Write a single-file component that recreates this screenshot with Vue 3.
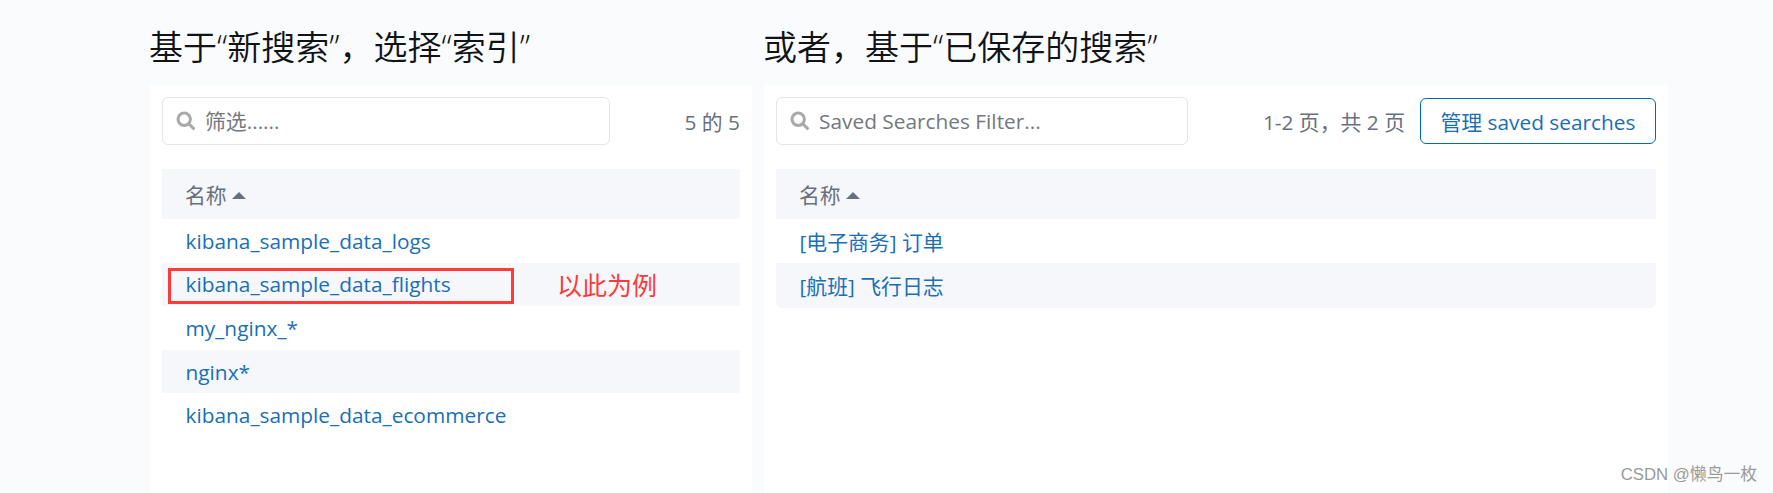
<template>
  <div class="page">
    <section class="column column-left">
      <h2 class="title">基于“新搜索”，选择“索引”</h2>
      <div class="panel">
        <div class="toolbar">
          <label class="search">
            <svg class="search-icon" viewBox="0 0 20 20" aria-hidden="true">
              <circle cx="8.2" cy="8.2" r="6.2" />
              <path d="M12.8 12.8 18.4 18.4" />
            </svg>
            <input type="text" placeholder="筛选......" />
          </label>
          <span class="pager">5 的 5</span>
        </div>
        <div class="table">
          <div class="table-head">名称<i class="sort"></i></div>
          <div v-for="(row, index) in indices" :key="row" class="row" :class="{ striped: index % 2 === 1 }">
            <a class="link">{{ row }}</a>
            <template v-if="row === 'kibana_sample_data_flights'">
              <span class="mark"></span>
              <span class="note">以此为例</span>
            </template>
          </div>
        </div>
      </div>
    </section>

    <section class="column column-right">
      <h2 class="title">或者，基于“已保存的搜索”</h2>
      <div class="panel">
        <div class="toolbar">
          <label class="search search-saved">
            <svg class="search-icon" viewBox="0 0 20 20" aria-hidden="true">
              <circle cx="8.2" cy="8.2" r="6.2" />
              <path d="M12.8 12.8 18.4 18.4" />
            </svg>
            <input type="text" placeholder="Saved Searches Filter..." />
          </label>
          <span class="pager">1-2 页，共 2 页</span>
          <button class="manage">管理 saved searches</button>
        </div>
        <div class="table">
          <div class="table-head">名称<i class="sort"></i></div>
          <div v-for="(row, index) in saved" :key="row" class="row" :class="{ striped: index % 2 === 1 }">
            <a class="link">{{ row }}</a>
          </div>
        </div>
      </div>
    </section>

    <span class="watermark">CSDN @懒鸟一枚</span>
  </div>
</template>

<script setup>
const indices = [
  'kibana_sample_data_logs',
  'kibana_sample_data_flights',
  'my_nginx_*',
  'nginx*',
  'kibana_sample_data_ecommerce',
]

const saved = ['[电子商务] 订单', '[航班] 飞行日志']
</script>

<style>
html,
body {
  margin: 0;
  background: #fafbfd;
}
</style>

<style scoped>
.page {
  position: relative;
  width: 1773px;
  height: 493px;
  overflow: hidden;
  box-sizing: border-box;
  padding-left: 150px;
  display: flex;
  gap: 12px;
  background: #fafbfd;
  font-family: "Open Sans", "Noto Sans CJK SC", sans-serif;
  font-size: 20.85px;
  color: #343741;
}

.column-left {
  width: 602px;
}

.column-right {
  width: 904px;
}

.title {
  margin: 0 0 0 -1px;
  height: 85px;
  line-height: 94px;
  font-size: 34px;
  font-weight: 350;
  color: #111317;
  white-space: nowrap;
}

.panel {
  height: 408px;
  box-sizing: border-box;
  padding: 12px;
  background: #fff;
}

.toolbar {
  display: flex;
  align-items: center;
  height: 48px;
}

.search {
  display: flex;
  align-items: center;
  gap: 9px;
  width: 448px;
  height: 48px;
  box-sizing: border-box;
  padding-left: 13px;
  border: 1px solid #e3e5e8;
  border-radius: 6px;
  background: #fff;
}

.search-saved {
  width: 412px;
}

.search-icon {
  flex: none;
  width: 20px;
  height: 20px;
  fill: none;
  stroke: #a8a9ab;
  stroke-width: 3;
}

.search input {
  flex: 1;
  min-width: 0;
  border: 0;
  outline: 0;
  padding: 0;
  background: transparent;
  font: inherit;
  color: #343741;
}

.search input::placeholder {
  color: #74787f;
  opacity: 1;
}

.pager {
  margin-left: auto;
  color: #69707d;
  white-space: nowrap;
}

.manage {
  margin-left: 15px;
  width: 236px;
  height: 46px;
  padding: 0;
  border: 1px solid #006bb4;
  border-radius: 6px;
  background: #fff;
  font: inherit;
  color: #1a6fb5;
  white-space: nowrap;
}

.table {
  margin-top: 24px;
}

.table-head {
  display: flex;
  align-items: center;
  height: 50px;
  padding-left: 23px;
  background: #f5f7fa;
  color: #69707d;
}

.sort {
  margin-left: 5px;
  margin-top: 2px;
  width: 0;
  height: 0;
  border-left: 7px solid transparent;
  border-right: 7px solid transparent;
  border-bottom: 7px solid #69707d;
}

.row {
  position: relative;
  display: flex;
  align-items: center;
  height: 43.6px;
  padding-left: 23.5px;
}

.column-right .row:last-child {
  height: 45px;
  border-bottom-right-radius: 6px;
  border-bottom-left-radius: 6px;
}

.striped {
  background: #f5f7fa;
}

.link {
  color: #1a6fb5;
  white-space: nowrap;
}

.mark {
  position: absolute;
  left: 6px;
  top: 5px;
  width: 346px;
  height: 36px;
  box-sizing: border-box;
  border: 3px solid #fe3a3a;
}

.note {
  position: absolute;
  left: 395px;
  top: 4px;
  font-size: 25px;
  line-height: 36px;
  color: #fe3a3a;
}

.watermark {
  position: absolute;
  right: 16px;
  bottom: 8px;
  font-family: "Liberation Sans", "Noto Sans CJK SC", sans-serif;
  font-size: 16.8px;
  line-height: 20px;
  color: #9a9a9a;
}
</style>
